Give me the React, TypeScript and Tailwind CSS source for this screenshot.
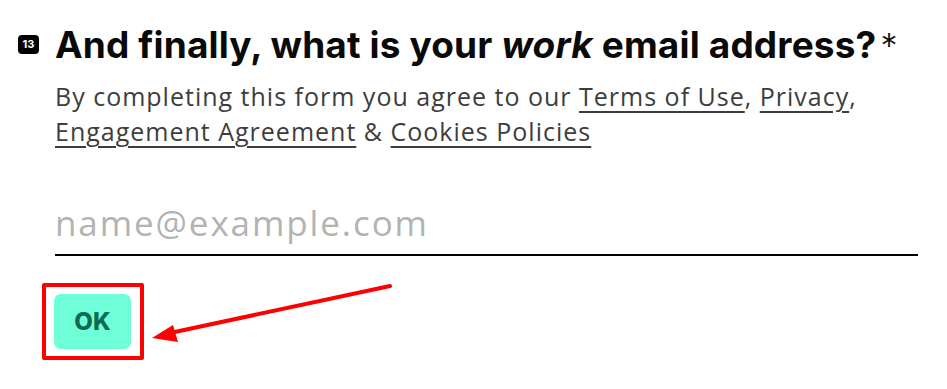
import React from 'react';

const sans = { fontFamily: 'Inter, "Open Sans", sans-serif' };

/**
 * Form question step asking for the work email, with annotation overlay
 */
const App: React.FC = () => {
  return (
    <div className="relative w-[947px] h-[389px] bg-white overflow-hidden" style={sans}>
      <div className="pt-[25px] pl-[18px] pr-[29px]">
        {/* Question header */}
        <div className="flex items-start">
          <div className="mt-[10px] flex h-[19px] w-[21px] items-center justify-center rounded-[4px] bg-black text-[11px] font-bold text-white">
            13
          </div>
          <h1 className="ml-[16px] whitespace-nowrap text-[37px] font-bold leading-[40px] tracking-[0.15px] text-[#0a0a0a]">
            And finally, what is your <em className="italic">work</em> email address?
            <span className="ml-[4px] font-light text-[34px]">*</span>
          </h1>
        </div>

        {/* Terms text */}
        <p className="ml-[37px] mt-[13px] text-[25px] leading-[35px] tracking-[1px] text-[#3d3d3d] font-['Open_Sans',sans-serif]">
          By completing this form you agree to our{' '}
          <a className="underline underline-offset-[5px]">Terms of Use</a>,{' '}
          <a className="underline underline-offset-[5px]">Privacy</a>,{' '}
          <br />
          <a className="underline underline-offset-[5px]">Engagement Agreement</a> &amp;{' '}
          <a className="underline underline-offset-[5px]">Cookies Policies</a>
        </p>

        {/* Email input */}
        <div className="ml-[37px] mt-[52px] border-b-2 border-black pb-[9px]">
          <input
            className="w-full bg-transparent text-[35px] leading-[44px] tracking-[1.9px] text-black outline-none placeholder:text-[#b3b3b3] font-['Open_Sans',sans-serif]"
            placeholder="name@example.com"
          />
        </div>

        {/* Submit */}
        <div className="ml-[36px] mt-[38px]">
          <button className="flex h-[55px] w-[77px] items-center justify-center rounded-[7px] bg-[#6effd8] text-[24px] font-extrabold text-[#0c6b52]">
            OK
          </button>
        </div>
      </div>

      {/* Annotation: highlight box */}
      <div className="absolute left-[42px] top-[283px] h-[77px] w-[102px] rounded-[2px] border-[4px] border-[#ff0000]" />

      {/* Annotation: arrow */}
      <svg className="absolute left-0 top-0" width="947" height="389" viewBox="0 0 947 389">
        <line x1="390" y1="286" x2="170" y2="333" stroke="#ff0000" strokeWidth="4" strokeLinecap="round" />
        <polygon points="152,338 173,325 178,342" fill="#ff0000" />
      </svg>
    </div>
  );
};

export default App;
